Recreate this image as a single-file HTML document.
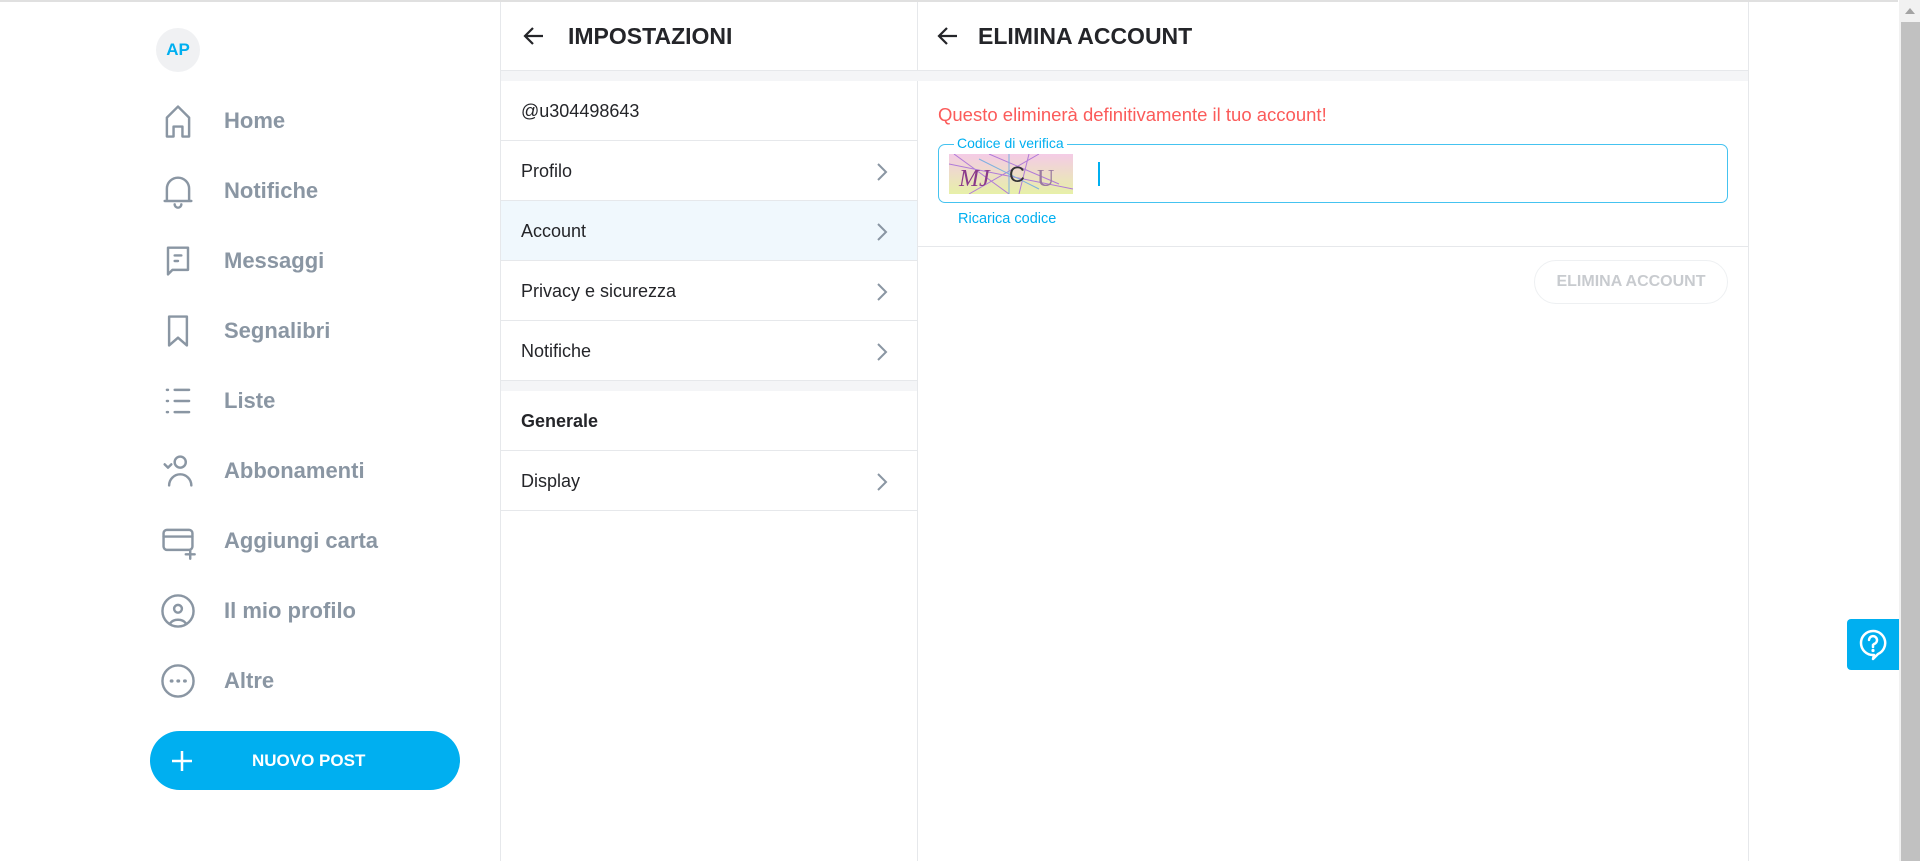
<!DOCTYPE html>
<html><head><meta charset="utf-8"><style>
*{box-sizing:border-box;margin:0;padding:0}
body{width:1920px;height:861px;overflow:hidden;background:#fff;font-family:"Liberation Sans",sans-serif;position:relative;color:#242529}
.a{position:absolute}
.nav{position:absolute;left:158px;height:44px;display:flex;align-items:center}
.nav svg{width:40px;height:40px;margin-right:26px;fill:none;stroke:#8a96a3;stroke-width:2.2;stroke-linecap:round;stroke-linejoin:round}
.nav span{font-size:22px;font-weight:bold;color:#8a96a3}
.row{position:absolute;left:501px;width:416px;height:60px;border-bottom:1px solid #e6e8eb;display:flex;align-items:center;padding-left:20px;padding-top:2px;font-size:18px}
.row svg{position:absolute;left:374px;top:20px;width:14px;height:22px;fill:none;stroke:#8a96a3;stroke-width:2}
</style></head><body>
<div class="a" style="left:0;top:0;width:1898px;height:2px;background:#e0e0e0"></div>
<div class="a" style="left:156px;top:28px;width:44px;height:44px;border-radius:50%;background:#f0f1f3;color:#00aff0;font-weight:bold;font-size:17px;display:flex;align-items:center;justify-content:center">AP</div>
<div class="nav" style="top:99px"><svg viewBox="0 0 36 36"><path d="M8 32V15L18 5l10 10v17h-6v-9h-8v9z"/></svg><span>Home</span></div>
<div class="nav" style="top:169px"><svg viewBox="0 0 36 36"><path d="M8 27V16a10 10 0 0 1 20 0v11H8zM6 27h24M15 30a3 3 0 0 0 6 0"/></svg><span>Notifiche</span></div>
<div class="nav" style="top:239px"><svg viewBox="0 0 36 36"><path d="M9 6h18v20H13l-4 4zM15 13h6M15 18h3"/></svg><span>Messaggi</span></div>
<div class="nav" style="top:309px"><svg viewBox="0 0 36 36"><path d="M10 5h16v26l-8-7-8 7z"/></svg><span>Segnalibri</span></div>
<div class="nav" style="top:379px"><svg viewBox="0 0 36 36"><path d="M15 8h13M15 18h13M15 28h13M8 8h1M8 18h1M8 28h1"/></svg><span>Liste</span></div>
<div class="nav" style="top:449px"><svg viewBox="0 0 36 36"><circle cx="20" cy="10" r="5"/><path d="M10 31a10 10 0 0 1 20 0M6 12l3 3 3-3"/></svg><span>Abbonamenti</span></div>
<div class="nav" style="top:519px"><svg viewBox="0 0 36 36"><rect x="5" y="8" width="26" height="18" rx="3"/><path d="M5 14h26M29 26v8M25 30h8"/></svg><span>Aggiungi carta</span></div>
<div class="nav" style="top:589px"><svg viewBox="0 0 36 36"><circle cx="18" cy="18" r="14"/><circle cx="18" cy="16" r="3.5"/><path d="M11 29a8 6 0 0 1 14 0"/></svg><span>Il mio profilo</span></div>
<div class="nav" style="top:659px"><svg viewBox="0 0 36 36"><circle cx="18" cy="18" r="14"/><path d="M12 18h.5M18 18h.5M24 18h.5" stroke-width="3"/></svg><span>Altre</span></div>
<div class="a" style="left:150px;top:731px;width:310px;height:59px;border-radius:30px;background:#00aff0;color:#fff;font-weight:bold;font-size:17px">
<svg class="a" style="left:20px;top:18px" width="24" height="24" viewBox="0 0 24 24"><path d="M12 2v20M2 12h20" stroke="#fff" stroke-width="2.5"/></svg>
<span class="a" style="left:102px;top:20px">NUOVO POST</span></div>
<div class="a" style="left:500px;top:2px;width:1px;height:859px;background:#e6e8eb"></div>
<div class="a" style="left:917px;top:2px;width:1px;height:859px;background:#e6e8eb"></div>
<div class="a" style="left:1748px;top:2px;width:1px;height:859px;background:#e6e8eb"></div>
<svg class="a" style="left:522px;top:24px" width="24" height="24" viewBox="0 0 24 24"><path d="M21 12H4M11 4l-8 8 8 8" fill="none" stroke="#242529" stroke-width="2.2"/></svg>
<div class="a" style="left:568px;top:23px;font-size:23px;font-weight:bold;color:#242529">IMPOSTAZIONI</div>
<div class="a" style="left:501px;top:70px;width:1247px;height:1px;background:#e6e8eb"></div>
<div class="a" style="left:501px;top:71px;width:1247px;height:10px;background:#f4f5f7"></div>
<div class="row" style="top:81px">@u304498643</div>
<div class="row" style="top:141px">Profilo<svg viewBox="0 0 14 22"><path d="M3 3l8 8-8 8"/></svg></div>
<div class="row" style="top:201px;background:#f0f8fd">Account<svg viewBox="0 0 14 22"><path d="M3 3l8 8-8 8"/></svg></div>
<div class="row" style="top:261px">Privacy e sicurezza<svg viewBox="0 0 14 22"><path d="M3 3l8 8-8 8"/></svg></div>
<div class="row" style="top:321px">Notifiche<svg viewBox="0 0 14 22"><path d="M3 3l8 8-8 8"/></svg></div>
<div class="a" style="left:501px;top:381px;width:416px;height:10px;background:#f4f5f7"></div>
<div class="row" style="top:391px;font-weight:bold">Generale</div>
<div class="row" style="top:451px">Display<svg viewBox="0 0 14 22"><path d="M3 3l8 8-8 8"/></svg></div>
<svg class="a" style="left:936px;top:24px" width="24" height="24" viewBox="0 0 24 24"><path d="M21 12H4M11 4l-8 8 8 8" fill="none" stroke="#242529" stroke-width="2.2"/></svg>
<div class="a" style="left:978px;top:23px;font-size:23px;font-weight:bold;color:#242529">ELIMINA ACCOUNT</div>
<div class="a" style="left:938px;top:104px;font-size:18.5px;color:#fb5b5a">Questo eliminerà definitivamente il tuo account!</div>
<div class="a" style="left:938px;top:144px;width:790px;height:59px;border:1.5px solid #45c3f0;border-radius:7px"></div>
<div class="a" style="left:954px;top:135px;padding:0 3px;background:#fff;font-size:14px;color:#00aff0">Codice di verifica</div>
<div class="a" style="left:949px;top:154px;width:124px;height:40px;background:linear-gradient(180deg,#f4cbe6,#e7f0a8);overflow:hidden">
<svg width="124" height="40"><g fill="none" stroke-width="1"><path d="M5 0L60 40M20 40L90 0M40 0l70 30M0 10l124 25M80 0L70 40" stroke="#b07ad8"/><path d="M60 0v40M30 5l60 30" stroke="#7cb0e0"/></g>
<text x="10" y="32" font-family="Liberation Serif" font-size="24" fill="#8a3a8a" font-style="italic">MJ</text><text x="60" y="28" font-family="Liberation Sans" font-size="22" fill="#333">C</text><text x="88" y="32" font-family="Liberation Serif" font-size="24" fill="#9a7aa0">U</text></svg></div>
<div class="a" style="left:1098px;top:162px;width:1.5px;height:24px;background:#00aff0"></div>
<div class="a" style="left:958px;top:211px;font-size:14.5px;color:#00aff0">Ricarica codice</div>
<div class="a" style="left:918px;top:246px;width:830px;height:1px;background:#e6e8eb"></div>
<div class="a" style="left:1534px;top:260px;width:194px;height:44px;border:1px solid #eef0f2;border-radius:22px;color:#c8cbcf;font-size:16px;font-weight:bold;display:flex;align-items:center;justify-content:center">ELIMINA ACCOUNT</div>
<div class="a" style="left:1847px;top:619px;width:52px;height:51px;background:#00aff0;border-radius:4px 0 0 4px">
<svg class="a" style="left:12px;top:10px" width="28" height="32" viewBox="0 0 28 32"><path d="M14 2a12 12 0 1 0 0 24h1l-1 4 5-5A12 12 0 0 0 14 2z" fill="none" stroke="#fff" stroke-width="2.5" stroke-linejoin="round"/><path d="M10 11a4 4 0 1 1 5 4l-1 1v2" fill="none" stroke="#fff" stroke-width="2.5" stroke-linecap="round"/><circle cx="14" cy="21.5" r="1.6" fill="#fff"/></svg></div>
<div class="a" style="left:1899px;top:0;width:21px;height:861px;background:#f1f1f1"></div>
<div class="a" style="left:1901px;top:22px;width:19px;height:839px;background:#c1c1c1"></div>
<div class="a" style="left:1905px;top:8px;width:0;height:0;border-left:5px solid transparent;border-right:5px solid transparent;border-bottom:6px solid #a3a3a3"></div>
</body></html>
